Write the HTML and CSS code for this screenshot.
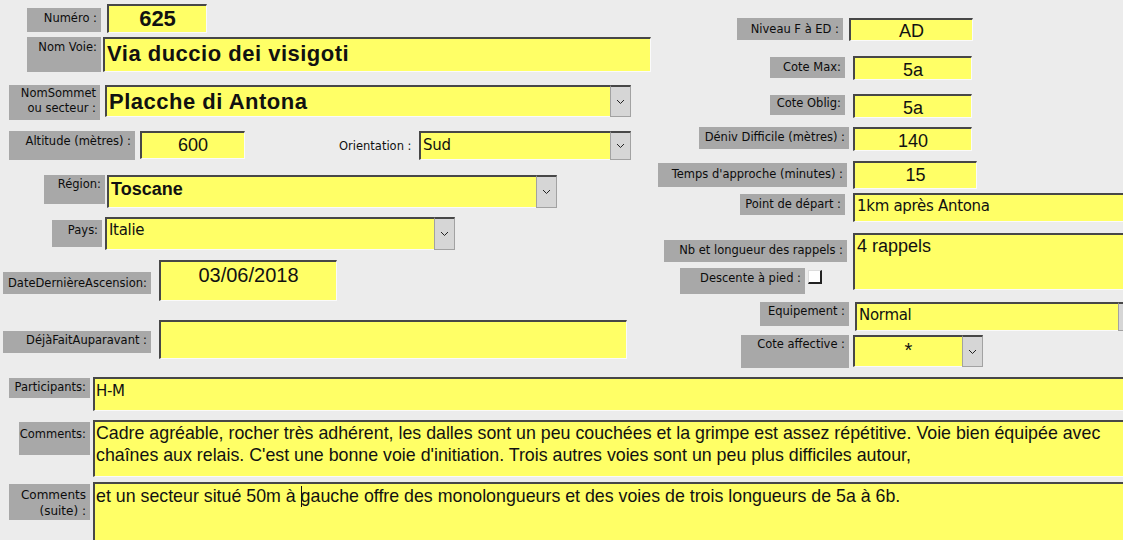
FILE: index.html
```html
<!DOCTYPE html>
<html lang="fr">
<head>
  <meta charset="UTF-8">
  <title>Fiche voie</title>
  <link rel="stylesheet" href="styles.css">
</head>
<body>
  <div class="form">
    <div class="top">
      <div class="col-left">
        <div class="row row-num">
          <div class="lbl lbl-num">Numéro :</div>
          <div class="fld fld-num arial bold22 center">625</div>
        </div>
        <div class="row row-voie">
          <div class="lbl lbl-voie">Nom Voie:</div>
          <div class="fld fld-voie arial bold22">Via duccio dei visigoti</div>
        </div>
        <div class="row row-sommet">
          <div class="lbl lbl-sommet">NomSommet<br>ou secteur :</div>
          <div class="combo combo-sommet">
            <div class="fld arial bold22">Placche di Antona</div>
            <div class="drop"><svg width="9" height="6" viewBox="0 0 9 6"><polyline points="1,1 4.5,4.5 8,1" fill="none" stroke="#222" stroke-width="1"/></svg></div>
          </div>
        </div>
        <div class="row row-alt">
          <div class="lbl lbl-alt">Altitude (mètres) :</div>
          <div class="fld fld-alt arial num18 center">600</div>
          <div class="plain lbl-orient">Orientation :</div>
          <div class="combo combo-orient">
            <div class="fld tahoma">Sud</div>
            <div class="drop"><svg width="9" height="6" viewBox="0 0 9 6"><polyline points="1,1 4.5,4.5 8,1" fill="none" stroke="#222" stroke-width="1"/></svg></div>
          </div>
        </div>
        <div class="row row-region">
          <div class="lbl lbl-region">Région:</div>
          <div class="combo combo-region">
            <div class="fld arial bold18">Toscane</div>
            <div class="drop"><svg width="9" height="6" viewBox="0 0 9 6"><polyline points="1,1 4.5,4.5 8,1" fill="none" stroke="#222" stroke-width="1"/></svg></div>
          </div>
        </div>
        <div class="row row-pays">
          <div class="lbl lbl-pays">Pays:</div>
          <div class="combo combo-pays">
            <div class="fld tahoma">Italie</div>
            <div class="drop"><svg width="9" height="6" viewBox="0 0 9 6"><polyline points="1,1 4.5,4.5 8,1" fill="none" stroke="#222" stroke-width="1"/></svg></div>
          </div>
        </div>
        <div class="row row-date">
          <div class="lbl lbl-date">DateDernièreAscension:</div>
          <div class="fld fld-date arial center">03/06/2018</div>
        </div>
        <div class="row row-deja">
          <div class="lbl lbl-deja">DéjàFaitAuparavant :</div>
          <div class="fld fld-deja"></div>
        </div>
      </div>

      <div class="col-right">
        <div class="row row-niveau">
          <div class="lbl lbl-niveau">Niveau F à ED :</div>
          <div class="fld fld-niveau arial num18 center">AD</div>
        </div>
        <div class="row row-max">
          <div class="lbl lbl-max">Cote Max:</div>
          <div class="fld fld-small arial num18 center">5a</div>
        </div>
        <div class="row row-oblig">
          <div class="lbl lbl-oblig">Cote Oblig:</div>
          <div class="fld fld-small arial num18 center">5a</div>
        </div>
        <div class="row row-deniv">
          <div class="lbl lbl-deniv">Déniv Difficile (mètres) :</div>
          <div class="fld fld-deniv arial num18 center">140</div>
        </div>
        <div class="row row-temps">
          <div class="lbl lbl-temps">Temps d'approche (minutes) :</div>
          <div class="fld fld-temps arial num18 center">15</div>
        </div>
        <div class="row row-depart">
          <div class="lbl lbl-depart">Point de départ :</div>
          <div class="fld fld-depart tahoma">1km après Antona</div>
        </div>
        <div class="row row-rappels">
          <div class="stack">
            <div class="lbl lbl-rappels">Nb et longueur des rappels :</div>
            <div class="desc">
              <div class="lbl lbl-desc">Descente à pied :</div>
              <div class="check"></div>
            </div>
          </div>
          <div class="fld fld-rappels arial">4 rappels</div>
        </div>
        <div class="row row-equip">
          <div class="lbl lbl-equip">Equipement :</div>
          <div class="combo combo-equip">
            <div class="fld tahoma">Normal</div>
            <div class="drop"><svg width="9" height="6" viewBox="0 0 9 6"><polyline points="1,1 4.5,4.5 8,1" fill="none" stroke="#222" stroke-width="1"/></svg></div>
          </div>
        </div>
        <div class="row row-affect">
          <div class="lbl lbl-affect">Cote affective :</div>
          <div class="combo combo-affect">
            <div class="fld fld-star arial center">*</div>
            <div class="drop"><svg width="9" height="6" viewBox="0 0 9 6"><polyline points="1,1 4.5,4.5 8,1" fill="none" stroke="#222" stroke-width="1"/></svg></div>
          </div>
        </div>
      </div>
    </div>

    <div class="bottom">
      <div class="row row-part">
        <div class="lbl lbl-part">Participants:</div>
        <div class="fld fld-wide fld-part tahoma">H-M</div>
      </div>
      <div class="row row-comm">
        <div class="lbl lbl-comm">Comments:</div>
        <div class="fld fld-wide fld-comm arial">Cadre agréable, rocher très adhérent, les dalles sont un peu couchées et la grimpe est assez répétitive. Voie bien équipée avec chaînes aux relais. C'est une bonne voie d'initiation. Trois autres voies sont un peu plus difficiles autour,</div>
      </div>
      <div class="row row-suite">
        <div class="lbl lbl-suite">Comments<br>(suite) :</div>
        <div class="fld fld-wide fld-suite arial">et un secteur situé 50m à <span class="caret"></span>gauche offre des monolongueurs et des voies de trois longueurs de 5a à 6b.</div>
      </div>
    </div>
  </div>
</body>
</html>
```

FILE: styles.css
```css
html, body {
  margin: 0;
  overflow: hidden;
}

body {
  background-color: #ececec;
  color: #111;
}

.form {
  width: 1123px;
  height: 540px;
  overflow: hidden;
  display: flex;
  flex-direction: column;
}

.top {
  display: grid;
  grid-template-columns: 650px 473px;
  height: 368px;
}

.col-left,
.col-right {
  display: flex;
  flex-direction: column;
  min-width: 0;
}

.row {
  display: flex;
  align-items: flex-start;
  flex-shrink: 0;
}

/* labels grises facon Access */
.lbl {
  box-sizing: border-box;
  background-color: #a8a8a8;
  color: #0c0c0c;
  font-family: "DejaVu Sans", Verdana, sans-serif;
  font-size: 11.5px;
  line-height: 13px;
  text-align: right;
  padding: 4px 4px 0 0;
  white-space: nowrap;
  flex-shrink: 0;
}

.plain {
  font-family: "DejaVu Sans", Verdana, sans-serif;
  font-size: 11.5px;
  line-height: 13px;
  text-align: right;
  white-space: nowrap;
  flex-shrink: 0;
}

/* champs jaunes */
.fld {
  box-sizing: border-box;
  background-color: #ffff66;
  border-top: 2px solid #474747;
  border-left: 2px solid #474747;
  border-right: 1px solid #fafafa;
  border-bottom: 1px solid #fafafa;
  padding: 0 2px;
  white-space: nowrap;
  overflow: hidden;
  flex-shrink: 0;
}

.arial { font-family: "Liberation Sans", Arial, sans-serif; }
.tahoma {
  font-family: "DejaVu Sans", Verdana, sans-serif;
  font-size: 15px;
  line-height: 22px;
  letter-spacing: -0.3px;
}
.bold22 { font-size: 22px; font-weight: bold; letter-spacing: 0.5px; line-height: 29px; }
.bold18 { font-size: 18px; font-weight: bold; line-height: 24px; }
.num18 { font-size: 18px; line-height: 24px; }
.center { text-align: center; }

.combo {
  display: flex;
  flex-shrink: 0;
}

.combo .fld {
  flex: 1;
  height: 100%;
  border-right: none;
}

.drop {
  box-sizing: border-box;
  width: 21px;
  height: 100%;
  background-color: #d6d6d6;
  border: 1px solid #a2a2a2;
  border-top: 2px solid #474747;
  display: flex;
  align-items: center;
  justify-content: center;
  flex-shrink: 0;
}

/* colonne gauche */
.row-num { margin-top: 4px; }
.lbl-num { margin: 4px 0 0 27px; width: 74px; height: 24px; }
.fld-num { margin-left: 6px; width: 100px; height: 29px; line-height: 26px; letter-spacing: 0; }

.row-voie { margin-top: 4px; }
.lbl-voie { margin-left: 27px; width: 74px; height: 35px; }
.fld-voie { margin-left: 2px; width: 548px; height: 35px; }

.row-sommet { margin-top: 13px; }
.lbl-sommet { margin-left: 9px; width: 91px; height: 35px; padding-top: 1px; line-height: 15px; }
.combo-sommet { margin-left: 5px; width: 526px; height: 32px; }

.row-alt { margin-top: 11px; }
.lbl-alt { margin-left: 9px; width: 126px; height: 29px; }
.fld-alt { margin-left: 5px; width: 105px; height: 28px; }
.lbl-orient { margin: 9px 0 0 94px; width: 72px; }
.combo-orient { margin-left: 8px; width: 212px; height: 29px; }
.combo-orient .fld { padding-top: 1px; }

.row-region { margin-top: 15px; }
.lbl-region { margin-left: 44px; width: 61px; height: 29px; padding-top: 3px; }
.combo-region { margin-left: 2px; width: 450px; height: 33px; }

.row-pays { margin-top: 9px; }
.lbl-pays { margin: 3px 0 0 52px; width: 50px; height: 27px; }
.combo-pays { margin-left: 3px; width: 350px; height: 33px; }

.row-date { margin-top: 10px; }
.lbl-date { margin: 12px 0 0 3px; width: 148px; height: 22px; padding-top: 5px; }
.fld-date { margin-left: 8px; width: 178px; height: 41px; font-size: 20px; line-height: 26px; }

.row-deja { margin-top: 19px; }
.lbl-deja { margin: 11px 0 0 3px; width: 148px; height: 22px; padding-top: 3px; }
.fld-deja { margin-left: 8px; width: 468px; height: 39px; }

/* colonne droite */
.row-niveau { margin-top: 18px; }
.lbl-niveau { margin-left: 87px; width: 106px; height: 22px; padding-top: 5px; }
.fld-niveau { margin-left: 6px; width: 124px; height: 23px; line-height: 23px; }

.row-max { margin-top: 15px; }
.lbl-max { margin: 1px 0 0 120px; width: 75px; height: 21px; }
.fld-small { margin-left: 8px; width: 119px; height: 24px; }

.row-oblig { margin-top: 14px; }
.lbl-oblig { margin: 1px 0 0 120px; width: 75px; height: 20px; padding-top: 2px; }

.row-deniv { margin-top: 9px; }
.lbl-deniv { margin-left: 49px; width: 150px; height: 22px; }
.fld-deniv { margin-left: 4px; width: 119px; height: 24px; }

.row-temps { margin-top: 10px; }
.lbl-temps { margin: 2px 0 0 8px; width: 189px; height: 24px; padding-top: 5px; }
.fld-temps { margin-left: 6px; width: 124px; height: 28px; }

.row-depart { margin-top: 4px; }
.lbl-depart { margin: 1px 0 0 90px; width: 105px; height: 21px; }
.fld-depart { margin-left: 8px; width: 280px; height: 29px; line-height: 23px; }

.row-rappels { margin-top: 11px; }
.stack {
  width: 203px;
  display: flex;
  flex-direction: column;
  flex-shrink: 0;
}
.lbl-rappels { margin: 7px 0 0 14px; width: 183px; height: 22px; }
.desc {
  display: flex;
  align-items: flex-start;
  margin-top: 6px;
}
.lbl-desc { margin-left: 30px; width: 125px; height: 26px; }
.check {
  box-sizing: border-box;
  margin: 2px 0 0 3px;
  width: 14px;
  height: 14px;
  background-color: #fff;
  border-top: 1px solid #dcdcdc;
  border-left: 1px solid #dcdcdc;
  border-right: 2px solid #222;
  border-bottom: 2px solid #222;
}
.fld-rappels { width: 280px; height: 57px; font-size: 18px; line-height: 22px; }

.row-equip { margin-top: 8px; }
.lbl-equip { margin-left: 110px; width: 89px; height: 24px; padding-top: 3px; }
.combo-equip { margin-left: 6px; width: 284px; height: 29px; }

.row-affect { margin-top: 4px; }
.lbl-affect { margin-left: 91px; width: 108px; height: 33px; padding-top: 3px; }
.combo-affect { margin-left: 4px; width: 130px; height: 32px; }
.fld-star { font-size: 20px; line-height: 26px; }

/* bas de la fiche */
.bottom {
  display: flex;
  flex-direction: column;
  margin-top: 9px;
}

.fld-wide {
  margin-left: 3px;
  width: 1040px;
  white-space: normal;
  padding-left: 1px;
}

.lbl-part { margin: 1px 0 0 9px; width: 81px; height: 20px; padding-top: 3px; }
.fld-part { height: 34px; line-height: 24px; }

.row-comm { margin-top: 9px; }
.lbl-comm { margin: 2px 0 0 19px; width: 71px; height: 33px; padding-top: 6px; }
.fld-comm { height: 57px; padding-right: 10px; font-size: 17.8px; line-height: 22px; }

.row-suite { margin-top: 5px; }
.lbl-suite { margin: 2px 0 0 9px; width: 81px; height: 36px; padding-top: 3px; font-size: 12px; line-height: 16px; }
.fld-suite { height: 62px; padding-top: 1px; font-size: 17.8px; line-height: 22px; }

.caret {
  display: inline-block;
  width: 1px;
  height: 21px;
  margin-right: -1px;
  background-color: #111;
  vertical-align: -5px;
}
```
